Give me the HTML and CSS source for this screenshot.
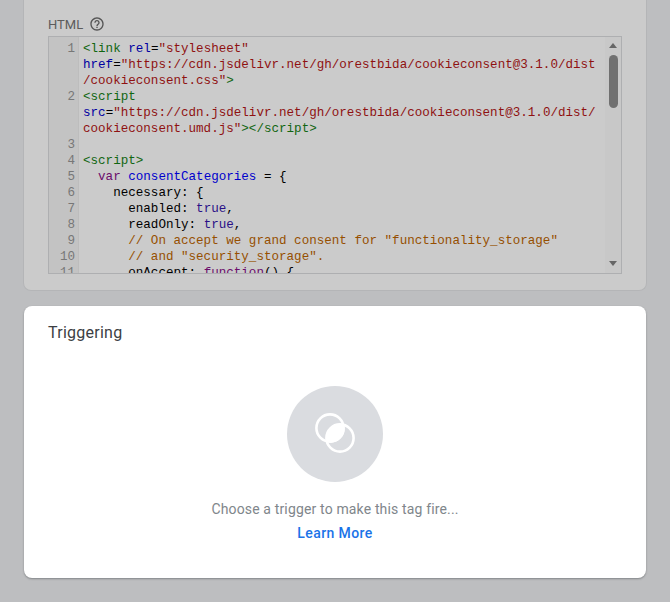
FILE: index.html
```html
<!DOCTYPE html>
<html lang="en">
<head>
<meta charset="utf-8">
<title>Tag configuration</title>
<link rel="stylesheet" href="styles.css">
</head>
<body>
<section class="card card-dim">
  <div class="label-row">
    <span class="label">HTML</span>
    <svg class="help" viewBox="0 0 24 24" width="16" height="16"><path fill="#555" d="M11 18h2v-2h-2v2zm1-16C6.48 2 2 6.48 2 12s4.48 10 10 10 10-4.48 10-10S17.52 2 12 2zm0 18c-4.41 0-8-3.59-8-8s3.59-8 8-8 8 3.590 8 8-3.590 8-8 8zm0-14c-2.210 0-4 1.790-4 4h2c0-1.100.9-2 2-2s2 .9 2 2c0 2-3 1.750-3 5h2c0-2.250 3-2.500 3-5 0-2.210-1.790-4-4-4z"/></svg>
  </div>
  <div class="editor">
    <div class="gutter">
      <div>1</div><div class="wrap2"></div><div>2</div><div class="wrap2"></div><div>3</div><div>4</div><div>5</div><div>6</div><div>7</div><div>8</div><div>9</div><div>10</div><div>11</div>
    </div>
    <pre class="code"><span class="tag">&lt;link</span> <span class="att">rel</span>=<span class="str">"stylesheet"</span>
<span class="att">href</span>=<span class="str">"https://cdn.jsdelivr.net/gh/orestbida/cookieconsent@3.1.0/dist</span>
<span class="str">/cookieconsent.css"</span><span class="tag">&gt;</span>
<span class="tag">&lt;script</span>
<span class="att">src</span>=<span class="str">"https://cdn.jsdelivr.net/gh/orestbida/cookieconsent@3.1.0/dist/</span>
<span class="str">cookieconsent.umd.js"</span><span class="tag">&gt;&lt;/script&gt;</span>

<span class="tag">&lt;script&gt;</span>
  <span class="kw">var</span> <span class="def">consentCategories</span> = {
    necessary: {
      enabled: <span class="atom">true</span>,
      readOnly: <span class="atom">true</span>,
      <span class="cm">// On accept we grand consent for "functionality_storage"</span>
      <span class="cm">// and "security_storage".</span>
      onAccept: <span class="kw">function</span>() {</pre>
    <div class="scrollbar">
      <span class="arrow arrow-up"></span>
      <span class="thumb"></span>
      <span class="arrow arrow-down"></span>
    </div>
  </div>
</section>
<section class="card card-main">
  <h2 class="title">Triggering</h2>
  <div class="empty">
    <div class="disc">
      <svg class="venn" viewBox="0 0 42 42" width="42" height="42">
        <path class="lens" d="M30 12A13.6 13.6 0 0 1 13 29A13.6 13.6 0 0 1 30 12z"/>
        <circle class="ring" cx="16" cy="15" r="13.6"/>
        <circle class="ring" cx="26" cy="25" r="13.6"/>
      </svg>
    </div>
    <p class="hint">Choose a trigger to make this tag fire...</p>
    <a class="learn" href="#">Learn More</a>
  </div>
</section>
</body>
</html>
```
FILE: styles.css
```css
* { box-sizing: border-box; }
html, body { margin: 0; height: 602px; overflow: hidden; }
body {
  background: #bdbec0;
  padding: 0 23px;
  font-family: Roboto, "Liberation Sans", sans-serif;
}
.card-dim {
  height: 291px;
  background: #cbcbcb;
  border: 1px solid #b4b5b7;
  border-top: 0;
  border-radius: 0 0 8px 8px;
  padding: 16px 24px 0;
}
.label-row { display: flex; align-items: center; gap: 6px; height: 16px; }
.label { font-size: 13px; color: #5c5c5c; }
.help { display: block; }
.editor {
  display: flex;
  height: 238px;
  margin-top: 4px;
  border: 1px solid #aeafb1;
  overflow: hidden;
  background: #cbcbcb;
}
.gutter {
  flex: none;
  width: 30px;
  padding: 4px 3px 0 0;
  background: #c3c3c3;
  border-right: 1px solid #bdbdbd;
  text-align: right;
  color: #777;
  font: 12.57px/16px "Liberation Mono", monospace;
}
.gutter div { height: 16px; }
.gutter .wrap2 { height: 32px; }
.code {
  flex: 1;
  min-width: 0;
  margin: 0;
  padding: 4px 0 0 4px;
  font: 12.57px/16px "Liberation Mono", monospace;
  color: #000;
  white-space: pre;
}
.tag { color: #116611; }
.att { color: #0000a0; }
.str { color: #8f1111; }
.kw { color: #6b0d6b; }
.def { color: #0000cc; }
.atom { color: #2a1087; }
.cm { color: #964f00; }
.scrollbar {
  flex: none;
  width: 16px;
  background: #c8c8c8;
  position: relative;
}
.arrow {
  position: absolute;
  left: 4px;
  width: 0;
  height: 0;
  border-left: 4.5px solid transparent;
  border-right: 4.5px solid transparent;
}
.arrow-up { top: 6px; border-bottom: 5px solid #666; }
.arrow-down { bottom: 7px; border-top: 5px solid #666; }
.thumb {
  position: absolute;
  left: 4px;
  top: 18px;
  width: 9px;
  height: 53px;
  border-radius: 5px;
  background: #707070;
}
.card-main {
  height: 272px;
  margin: 15px 1px 0 1px;
  background: #fff;
  border-radius: 8px;
  box-shadow: 0 1px 2px rgba(60,64,67,.45);
  padding: 16px 24px 0;
}
.title {
  margin: 0;
  font-size: 16px;
  line-height: 22px;
  font-weight: 400;
  letter-spacing: .25px;
  color: #3c4043;
}
.empty {
  display: flex;
  flex-direction: column;
  align-items: center;
  margin-top: 42px;
}
.disc {
  width: 96px;
  height: 96px;
  border-radius: 50%;
  background: #dadce0;
  display: flex;
  align-items: center;
  justify-content: center;
}
.venn { display: block; }
.lens { fill: #fff; }
.ring { fill: none; stroke: #fff; stroke-width: 2.6; }
.hint {
  margin: 19px 0 0;
  font-size: 14px;
  line-height: 16px;
  letter-spacing: .15px;
  color: #80868b;
}
.learn {
  margin-top: 8px;
  font-size: 14px;
  line-height: 16px;
  font-weight: 500;
  letter-spacing: .4px;
  color: #1a73e8;
  text-decoration: none;
}
```
